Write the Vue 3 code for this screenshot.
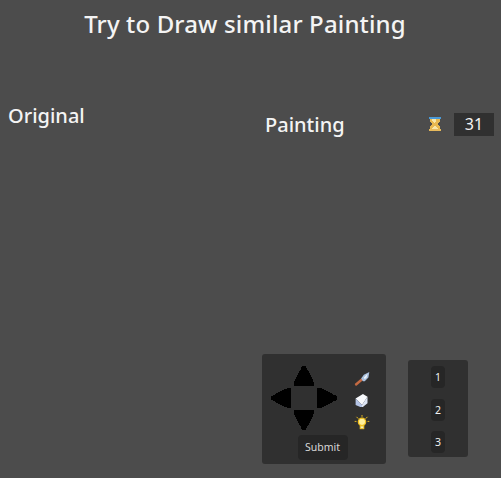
<script setup>
const numbers = [1, 2, 3]
const arrows = [
  { name: 'up', turn: 0 },
  { name: 'side-l', turn: -90 },
  { name: 'side-r', turn: 90 },
  { name: 'down', turn: 180 },
]
</script>

<template>
  <div class="page">
    <h1 class="title">Try to Draw similar Painting</h1>
    <main class="board">
      <section class="left">
        <h2 class="label">Original</h2>
      </section>
      <section class="right">
        <div class="head">
          <h2 class="label">Painting</h2>
          <div class="timer">
            <svg class="glass" width="12" height="14" viewBox="0 0 12 14" shape-rendering="crispEdges">
              <path d="M1 2h10v3L8 7l3 2v3H1V9l3-2-3-2z" fill="#e8b850" />
              <path d="M3 2h4v2L6 6H5L3 4zM3 12l2-3h2l2 3z" fill="#f8e6a8" />
              <rect x="0" y="0" width="12" height="2" fill="#4a9ad8" />
              <rect x="0" y="12" width="12" height="2" fill="#e6b95c" />
            </svg>
            <span class="count">31</span>
          </div>
        </div>
        <div class="tools">
          <div class="panel">
            <div class="pad">
              <svg
                v-for="a in arrows"
                :key="a.name"
                class="arrow"
                :class="a.name"
                width="20"
                height="20"
                viewBox="0 0 20 20"
              >
                <path
                  :transform="`rotate(${a.turn} 10 10)`"
                  d="M8 0h4l1 3 2 3 2 4 2 4 1 3v3H0v-3l1-3 2-4 2-4 2-3z"
                />
              </svg>
            </div>
            <div class="icons">
              <svg width="16" height="16" viewBox="0 0 16 16">
                <path d="M0 13l7-6 2 2-7 6H1z" fill="#c46a42" />
                <path d="M7 7l3-4 6-3-1 6-4 4H9z" fill="#a9c0de" />
                <path d="M10 6l4-4-1 4-2 2z" fill="#eef4fb" />
              </svg>
              <svg width="14" height="15" viewBox="0 0 14 15">
                <path d="M0 5l8-5 5 3-6 9z" fill="#f8fafd" />
                <path d="M0 5v7l7 3v-3z" fill="#b4c4e6" />
                <path d="M7 12l6-9v7l-6 5z" fill="#dde5f4" />
              </svg>
              <svg class="bulb" width="16" height="16" viewBox="0 0 16 16">
                <path d="M8 0v2M2 2l2 2M14 2l-2 2M0 7h2M14 7h2" stroke="#f0c020" stroke-width="1" fill="none" />
                <circle cx="8" cy="7.5" r="4" fill="#fff09a" stroke="#f0c020" stroke-width="1.4" />
                <rect x="6" y="12" width="4" height="3" fill="#f0f0c0" stroke="#f0c020" stroke-width="1" />
              </svg>
            </div>
            <button class="submit">Submit</button>
          </div>
          <div class="numbers">
            <button v-for="n in numbers" :key="n" class="num">{{ n }}</button>
          </div>
        </div>
      </section>
    </main>
  </div>
</template>

<style>
html, body { margin: 0; background: #4c4c4c; }
</style>

<style scoped>
.page {
  width: 501px;
  height: 478px;
  overflow: hidden;
  background: #4c4c4c;
  color: #f4f4f4;
  font-family: "Noto Sans", sans-serif;
}
.title {
  margin: 0;
  width: 490px;
  height: 50px;
  line-height: 47px;
  text-align: center;
  font-size: 24px;
  font-weight: 500;
  letter-spacing: 0.15px;
}
.board { display: flex; }
.left { width: 257px; padding-left: 8px; padding-top: 50px; box-sizing: border-box; }
.label {
  margin: 0;
  font-size: 20px;
  font-weight: 500;
  line-height: 32px;
}
.right { flex: 1; padding-top: 62px; }
.head {
  display: flex;
  align-items: center;
  justify-content: space-between;
  width: 229px;
  padding-left: 8px;
  height: 26px;
}
.timer { display: flex; align-items: center; gap: 13px; margin-top: -2px; }
.glass { display: block; }
.count {
  display: block;
  width: 40px;
  height: 23px;
  line-height: 23px;
  text-align: center;
  background: #303030;
  font-size: 16px;
}
.tools {
  display: flex;
  align-items: flex-start;
  gap: 22px;
  margin-top: 216px;
  padding-left: 5px;
}
.panel {
  position: relative;
  width: 124px;
  height: 110px;
  box-sizing: border-box;
  padding: 12px 0 0 9px;
  background: #303030;
  border-radius: 3px;
  display: grid;
  grid-template-columns: 83px 1fr;
  grid-template-rows: 64px auto;
}
.pad {
  display: grid;
  grid-template-columns: 20px 20px 20px;
  grid-template-rows: 20px 20px 20px;
  gap: 2px 3px;
}
.arrow { display: block; fill: #000; shape-rendering: crispEdges; }
.up { grid-area: 1 / 2; }
.side-l { grid-area: 2 / 1; }
.side-r { grid-area: 2 / 3; }
.down { grid-area: 3 / 2; }
.icons {
  display: flex;
  flex-direction: column;
  align-items: center;
  gap: 7px;
  padding-top: 6px;
  width: 16px;
}
.bulb { margin-top: 1px; }
.submit {
  grid-column: 1 / 3;
  justify-self: start;
  margin: 5px 0 0 27px;
  width: 50px;
  height: 25px;
  padding: 0 1px 2px 0;
  border: 0;
  border-radius: 4px;
  background: #262626;
  color: #d8d8d8;
  font: 10.5px "Noto Sans", sans-serif;
}
.numbers {
  margin-top: 6px;
  width: 60px;
  height: 97px;
  box-sizing: border-box;
  padding-top: 6px;
  display: flex;
  flex-direction: column;
  align-items: center;
  gap: 10.5px;
  background: #303030;
  border-radius: 3px;
}
.num {
  width: 14px;
  height: 22px;
  padding: 0;
  border: 0;
  border-radius: 4px;
  background: #262626;
  color: #f0f0f0;
  font: 10.5px "Noto Sans", sans-serif;
}
</style>
